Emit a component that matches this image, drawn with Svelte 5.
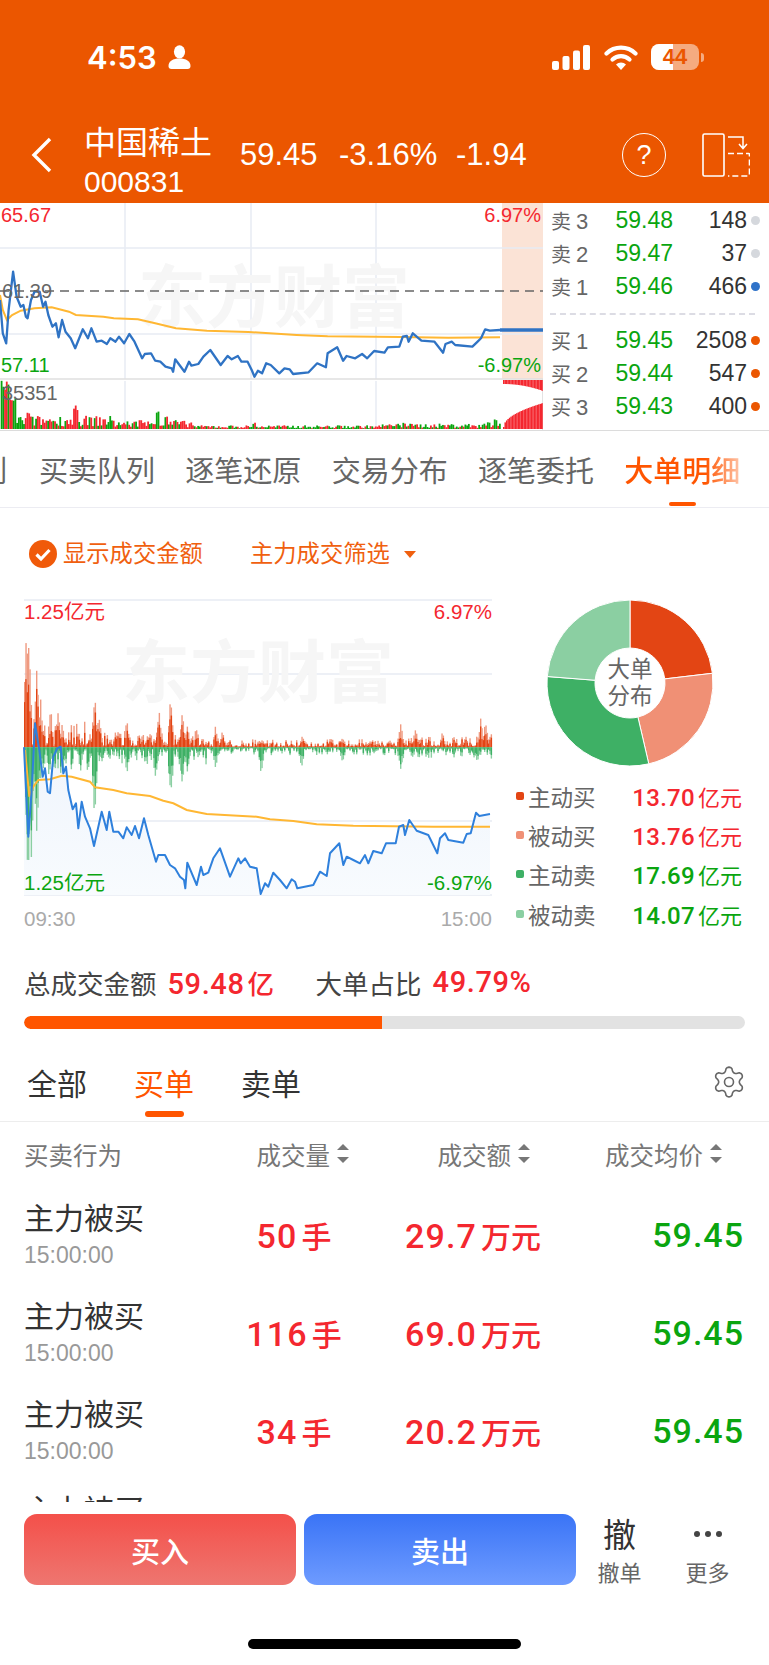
<script>
  // seeded generator so the bars stay the same between reloads
  let seed = 7;
  function rnd() {
    seed = (seed * 16807) % 2147483647;
    return seed / 2147483647;
  }

  function line(points, sx, sy, oy, ox = 0) {
    return points.map((p) => `${(p[0] / sx + ox).toFixed(1)},${(p[1] / sy + oy).toFixed(1)}`).join(' ');
  }

  // intraday price, drawn at 2.9 x 3 units
  const priceRaw = [[0,300],[8,400],[18,430],[25,330],[38,215],[48,290],[60,320],[68,315],[75,350],[80,355],[90,300],[100,275],[115,275],[125,320],[132,305],[140,345],[152,380],[162,370],[170,412],[180,360],[190,395],[205,415],[218,445],[240,388],[255,415],[265,385],[280,425],[295,422],[310,432],[320,415],[335,425],[345,410],[360,430],[375,402],[390,425],[412,475],[420,462],[438,460],[450,482],[465,485],[480,500],[498,505],[502,515],[508,478],[535,515],[548,485],[555,497],[575,492],[590,470],[610,450],[640,495],[660,468],[672,478],[690,468],[700,485],[718,485],[730,510],[738,530],[748,512],[760,520],[772,490],[785,495],[810,520],[825,505],[840,508],[850,522],[895,517],[920,490],[945,502],[950,460],[978,442],[995,482],[1005,468],[1030,475],[1050,462],[1065,475],[1085,453],[1115,458],[1125,442],[1158,440],[1168,410],[1180,408],[1185,425],[1197,400],[1222,422],[1260,425],[1285,458],[1292,432],[1310,425],[1320,435],[1370,440],[1385,425],[1395,415],[1407,388],[1420,392],[1450,390]];
  const avgRaw = [[0,285],[8,330],[20,360],[35,345],[60,332],[100,325],[150,322],[200,335],[220,345],[300,350],[330,355],[400,358],[450,370],[510,385],[600,392],[720,396],[860,405],[950,409],[1160,411],[1300,413],[1450,412]];
  const pricePts = line(priceRaw, 2.9, 3, 0);
  const avgPts = line(avgRaw, 2.9, 3, 0);

  // same day on the big-order chart, 3 x 3 units
  const bigRaw = [[72,472],[78,600],[85,740],[95,600],[105,400],[118,480],[128,560],[135,535],[143,605],[150,610],[160,500],[172,475],[182,470],[190,550],[198,530],[205,600],[218,658],[228,640],[235,715],[245,635],[255,680],[270,715],[282,768],[305,665],[320,720],[328,665],[340,725],[355,725],[370,745],[380,712],[395,735],[405,708],[417,745],[432,685],[445,735],[468,815],[475,795],[495,795],[510,825],[525,835],[540,860],[552,870],[556,895],[562,818],[590,885],[603,830],[610,855],[625,848],[640,805],[660,775],[690,860],[715,805],[722,820],[735,805],[750,830],[770,835],[782,912],[795,880],[805,890],[820,848],[840,870],[860,895],[875,868],[885,875],[892,895],[940,885],[960,845],[980,858],[990,790],[1018,760],[1030,825],[1040,800],[1060,810],[1080,820],[1095,795],[1105,820],[1120,783],[1145,790],[1158,760],[1187,760],[1197,710],[1210,705],[1215,735],[1228,690],[1250,722],[1285,735],[1312,790],[1320,745],[1335,730],[1345,750],[1390,758],[1400,732],[1412,730],[1428,668],[1438,678],[1470,672]];
  const bigAvgRaw = [[75,480],[88,620],[100,590],[115,570],[150,568],[185,557],[215,560],[270,575],[285,592],[340,600],[380,610],[450,618],[490,632],[520,640],[560,660],[620,672],[770,680],[810,688],[880,693],[950,703],[1060,707],[1300,710],[1470,710]];
  const bigPts = line(bigRaw, 3, 3, 0);
  const bigAvgPts = line(bigAvgRaw, 3, 3, 0);
  const bigArea = `24,305 ${bigPts} 490,305`;

  const upPeaks = [[78,400],[85,370],[108,260],[120,150],[150,120],[172,120],[185,70],[282,165],[295,110],[378,95],[475,125],[510,160],[545,115],[560,70],[645,70],[665,50],[785,30],[905,40],[990,30],[1025,35],[1200,80],[1245,70],[1325,50],[1395,40],[1440,90],[1455,85],[1475,60]];
  const downPeaks = [[75,120],[82,440],[92,370],[108,310],[118,130],[145,90],[160,60],[240,70],[282,220],[305,50],[378,90],[465,110],[510,175],[545,135],[560,80],[645,70],[782,100],[903,65],[1025,50],[1200,80],[1235,40],[1430,50],[1475,50]];

  function envelope(peaks, x, base) {
    const n = rnd();
    let h = base * (0.15 + n * n * 1.1);
    for (const [px, ph] of peaks) {
      const d = Math.abs(px - x);
      if (d < 9) h = Math.max(h, ph * (1 - d / 12) * (0.75 + rnd() * 0.25));
    }
    return h / 3;
  }

  const bigBars = [];
  for (let x = 72; x < 1476; x += 4) {
    const base = x < 300 ? 62 : x < 620 ? 42 : x < 1180 ? 20 : 26;
    const up = envelope(upPeaks, x, base);
    const down = envelope(downPeaks, x, base);
    bigBars.push({
      x: x / 3,
      up,
      upDark: up * (0.4 + rnd() * 0.4),
      down,
      downDark: down * (0.45 + rnd() * 0.35)
    });
  }

  // traded volume strip under the price chart
  const volPeaks = [[5,160],[18,150],[28,95],[40,100],[80,50],[218,75],[405,35],[455,62],[480,40],[505,30],[735,20],[1170,20],[1415,25],[1435,30]];
  const volBars = [];
  for (let x = 2; x < 1450; x += 5) {
    let h = (x < 330 ? 32 : x < 560 ? 20 : x < 1100 ? 9 : 13) * (0.25 + rnd());
    for (const [px, ph] of volPeaks) {
      if (Math.abs(px - x) < 7) h = Math.max(h, ph * (0.75 + rnd() * 0.25));
    }
    volBars.push({ x: x / 2.9, h: h / 3, up: rnd() > 0.5 });
  }

  // call auction bars on the shaded part of the strip
  const auctionBars = [];
  for (let i = 0; i < 28; i++) {
    const t = i / 27;
    auctionBars.push({
      x: 503 + i * 1.46,
      low: 2 + 24 * Math.sqrt(t),
      high: 4 + 7 * t * t
    });
  }

  // six-lobed gear outline
  const gear = (() => {
    const pts = [];
    for (let a = 0; a < 360; a += 6) {
      const rad = ((a - 90) * Math.PI) / 180;
      const w = Math.cos(6 * rad + Math.PI);
      const r = 12.6 + 2.3 * Math.sign(w) * Math.pow(Math.abs(w), 0.6);
      pts.push(`${(16 + r * Math.cos(rad)).toFixed(2)},${(16 + r * Math.sin(rad)).toFixed(2)}`);
    }
    return 'M' + pts.join('L') + 'Z';
  })();

  function slice(from, to) {
    const total = 59.22;
    const R = 83;
    const r = 35;
    const a = (from / total) * 2 * Math.PI - Math.PI / 2;
    const b = (to / total) * 2 * Math.PI - Math.PI / 2;
    const large = b - a > Math.PI ? 1 : 0;
    const p = (rad, k) => `${(84 + k * Math.cos(rad)).toFixed(2)} ${(84 + k * Math.sin(rad)).toFixed(2)}`;
    return `M${p(a, r)}L${p(a, R)}A${R} ${R} 0 ${large} 1 ${p(b, R)}L${p(b, r)}A${r} ${r} 0 ${large} 0 ${p(a, r)}Z`;
  }

  const asks = [
    { label: '卖', n: 3, price: '59.48', vol: '148', dot: 'grey' },
    { label: '卖', n: 2, price: '59.47', vol: '37', dot: 'grey' },
    { label: '卖', n: 1, price: '59.46', vol: '466', dot: 'blue' }
  ];
  const bids = [
    { label: '买', n: 1, price: '59.45', vol: '2508', dot: 'orange' },
    { label: '买', n: 2, price: '59.44', vol: '547', dot: 'orange' },
    { label: '买', n: 3, price: '59.43', vol: '400', dot: 'orange' }
  ];
  const tabs = ['买卖队列', '逐笔还原', '交易分布', '逐笔委托'];
  const legend = [
    { name: '主动买', value: '13.70', color: '#e34514', up: true },
    { name: '被动买', value: '13.76', color: '#f09075', up: true },
    { name: '主动卖', value: '17.69', color: '#3eb065', up: false },
    { name: '被动卖', value: '14.07', color: '#8bcfa2', up: false }
  ];
  const trades = [
    { qty: '50', amount: '29.7' },
    { qty: '116', amount: '69.0' },
    { qty: '34', amount: '20.2' }
  ];
</script>

<div class="page">
  <header class="top">
    <div class="status">
      <span class="clock">4:53</span>
      <svg class="person" width="23" height="24" viewBox="0 0 23 24">
        <ellipse cx="11.5" cy="6.8" rx="5.6" ry="6.6" fill="#fff" />
        <path d="M0.5 21c0-5 4.5-7.6 11-7.6s11 2.6 11 7.6c0 2-1 3-3 3H3.500c-2 0-3-1-3-3z" fill="#fff" />
      </svg>
      <svg class="signal" width="38" height="25" viewBox="0 0 38 25">
        <rect x="0" y="16" width="7" height="9" rx="2" fill="#fff" />
        <rect x="10.500" y="11" width="7" height="14" rx="2" fill="#fff" />
        <rect x="21" y="5.500" width="7" height="19.500" rx="2" fill="#fff" />
        <rect x="31" y="0" width="7" height="25" rx="2" fill="#fff" />
      </svg>
      <svg class="wifi" width="34" height="25" viewBox="0 0 34 25">
        <path d="M2.500 8.500a21 21 0 0 1 29 0" fill="none" stroke="#fff" stroke-width="4.200" stroke-linecap="round" />
        <path d="M8.500 14.500a12.500 12.500 0 0 1 17 0" fill="none" stroke="#fff" stroke-width="4.200" stroke-linecap="round" />
        <path d="M12 19.500a7 7 0 0 1 10 0L17 25z" fill="#fff" />
      </svg>
      <div class="battery">
        <span class="level"></span>
        <span class="charge">44</span>
      </div>
      <span class="nub"></span>
    </div>

    <div class="quote-bar">
      <svg class="back" width="21" height="36" viewBox="0 0 21 36">
        <path d="M19 2L3 18l16 16" fill="none" stroke="#fff" stroke-width="3.400" />
      </svg>
      <div class="stock">
        <div class="stock-name">中国稀土</div>
        <div class="stock-code">000831</div>
      </div>
      <div class="prices">
        <span>59.45</span>
        <span>-3.16%</span>
        <span>-1.94</span>
      </div>
      <div class="help">?</div>
      <svg class="split" width="48" height="44" viewBox="0 0 48 44">
        <rect x="1" y="1" width="21" height="42" rx="1.500" fill="none" stroke="#fff" stroke-width="1.600" />
        <path d="M26 20.500h20.500a1 1 0 0 1 1 1V42a1 1 0 0 1-1 1H26" fill="none" stroke="#fff" stroke-width="1.600" stroke-dasharray="6 3" />
        <path d="M26 4h15v11M37 11l4 4.500 4-4.500" fill="none" stroke="#fff" stroke-width="1.500" />
      </svg>
    </div>
  </header>

  <section class="quote">
    <div class="minute">
      <svg width="543" height="227" viewBox="0 203 543 227">
        <rect x="502" y="203" width="41" height="176" fill="#fbe3d6" />
        <g stroke="#e8ebf3" stroke-width="1.500">
          <path d="M125 203V379M251 203V379M376 203V379M125 381V429M251 381V429M376 381V429" />
          <path d="M0 248H543M0 334H543" />
        </g>
        <path d="M0 379H543" stroke="#dfdfdf" stroke-width="1.500" />
        <text class="mark" x="138" y="322">东方财富</text>
        <path d="M0 291H543" stroke="#666" stroke-width="1.300" stroke-dasharray="9 6" />
        {#each volBars as b}
          <rect x={b.x} y={429 - b.h} width="1.800" height={b.h} fill={b.up ? '#f4272f' : '#0aa50f'} />
        {/each}
        {#each auctionBars as b}
          <rect x={b.x} y={429 - b.low} width="1.500" height={b.low} fill="#f4272f" />
          <rect x={b.x} y="380" width="1.500" height={b.high} fill="#f4272f" />
        {/each}
        <g transform="translate(0 200)">
          <polyline points={avgPts} fill="none" stroke="#ffb733" stroke-width="2" />
          <polyline points={pricePts} fill="none" stroke="#2f73c4" stroke-width="2.300" stroke-linejoin="round" />
        </g>
        <path d="M500 330H543" stroke="#2f73c4" stroke-width="3.500" />
        <text class="axis red" x="1" y="222">65.67</text>
        <text class="axis red" x="541" y="222" text-anchor="end">6.97%</text>
        <text class="axis grey" x="2" y="298">61.39</text>
        <text class="axis green" x="1" y="372">57.11</text>
        <text class="axis green" x="541" y="372" text-anchor="end">-6.97%</text>
        <text class="axis grey" x="2" y="400">35351</text>
      </svg>
    </div>

    <div class="book">
      <div class="side">
        {#each asks as row}
          <div class="level-row">
            <span class="tag">{row.label}<i>{row.n}</i></span>
            <span class="ask-price">{row.price}</span>
            <span class="qty">{row.vol}</span>
            <span class="dot {row.dot}"></span>
          </div>
        {/each}
      </div>
      <div class="spread"></div>
      <div class="side">
        {#each bids as row}
          <div class="level-row">
            <span class="tag">{row.label}<i>{row.n}</i></span>
            <span class="ask-price">{row.price}</span>
            <span class="qty">{row.vol}</span>
            <span class="dot {row.dot}"></span>
          </div>
        {/each}
      </div>
    </div>
  </section>

  <nav class="tabs">
    <span class="cut">列</span>
    {#each tabs as t}
      <span class="tab">{t}</span>
    {/each}
    <span class="tab active">大单明细<em></em></span>
  </nav>

  <div class="filters">
    <svg width="28" height="28" viewBox="0 0 28 28">
      <circle cx="14" cy="14" r="14" fill="#f05a0a" />
      <path d="M7.500 14.500l4.500 4.500 8.500-9" fill="none" stroke="#fff" stroke-width="3.200" />
    </svg>
    <span class="show">显示成交金额</span>
    <span class="pick">主力成交筛选</span>
    <span class="caret"></span>
  </div>

  <section class="big">
    <div class="big-chart">
      <svg width="480" height="340" viewBox="20 596 480 340">
        <path d="M24 600H492M24 674H492M24 821H492M24 895H492" stroke="#e8ebf3" stroke-width="1.500" />
        <text class="mark" x="122" y="697">东方财富</text>
        <defs>
          <linearGradient id="under" x1="0" y1="0" x2="0" y2="1">
            <stop offset="0" stop-color="#eef4fc" />
            <stop offset="1" stop-color="#f8fbfe" />
          </linearGradient>
        </defs>
        <g transform="translate(0 590)">
          <polygon points={bigArea} fill="url(#under)" />
          {#each bigBars as b}
            <rect x={b.x} y={157.300 - b.up} width="1.400" height={b.up} fill="#ef9a80" />
            <rect x={b.x} y={157.300 - b.upDark} width="1.400" height={b.upDark} fill="#e34514" />
            <rect x={b.x} y="157.300" width="1.400" height={b.down} fill="#8bcfa2" />
            <rect x={b.x} y="157.300" width="1.400" height={b.downDark} fill="#3eb065" />
          {/each}
          <polyline points={bigAvgPts} fill="none" stroke="#ffb733" stroke-width="2" />
          <polyline points={bigPts} fill="none" stroke="#2f80dc" stroke-width="2" stroke-linejoin="round" />
        </g>
        <text class="axis small red" x="24" y="619">1.25亿元</text>
        <text class="axis small red" x="492" y="619" text-anchor="end">6.97%</text>
        <text class="axis small green" x="24" y="890">1.25亿元</text>
        <text class="axis small green" x="492" y="890" text-anchor="end">-6.97%</text>
        <text class="axis small pale" x="24" y="926">09:30</text>
        <text class="axis small pale" x="492" y="926" text-anchor="end">15:00</text>
      </svg>
    </div>

    <div class="share">
      <svg class="donut" width="168" height="168" viewBox="0 0 168 168">
        <g stroke="#fff" stroke-width="1">
          <path d={slice(0, 13.7)} fill="#e34514" />
          <path d={slice(13.7, 27.46)} fill="#f09075" />
          <path d={slice(27.46, 45.15)} fill="#3eb065" />
          <path d={slice(45.15, 59.22)} fill="#8bcfa2" />
        </g>
        <text class="donut-text" x="84" y="78" text-anchor="middle">大单</text>
        <text class="donut-text" x="84" y="105" text-anchor="middle">分布</text>
      </svg>
      <ul class="legend">
        {#each legend as item}
          <li>
            <span class="swatch" style="background:{item.color}"></span>
            <span class="legend-name">{item.name}</span>
            <span class="legend-value" class:up={item.up} class:down={!item.up}>{item.value}<small>亿元</small></span>
          </li>
        {/each}
      </ul>
    </div>
  </section>

  <div class="totals">
    <span>总成交金额</span>
    <strong>59.48<small>亿</small></strong>
    <span class="ratio">大单占比</span>
    <strong>49.79%</strong>
  </div>
  <div class="progress"><div class="fill" style="width:49.700%"></div></div>

  <div class="sub-tabs">
    <span>全部</span>
    <span class="on">买单<em></em></span>
    <span>卖单</span>
    <svg class="gear" width="32" height="32" viewBox="0 0 32 32">
      <path d={gear} fill="none" stroke="#666" stroke-width="1.600" stroke-linejoin="round" />
      <circle cx="16" cy="16" r="4.500" fill="none" stroke="#666" stroke-width="1.600" />
    </svg>
  </div>

  <div class="table-head">
    <span class="head-left">买卖行为</span>
    <span class="sort">成交量<i></i></span>
    <span class="sort">成交额<i></i></span>
    <span class="sort">成交均价<i></i></span>
  </div>

  <div class="rows">
    {#each trades as t}
      <div class="row">
        <div>
          <div class="kind">主力被买</div>
          <div class="time">15:00:00</div>
        </div>
        <span class="val qty-col">{t.qty}<small>手</small></span>
        <span class="val amt-col">{t.amount}<small>万元</small></span>
        <span class="val price-col">59.45</span>
      </div>
    {/each}
    <div class="kind next">主力被买</div>
  </div>

  <footer class="actions">
    <button class="buy">买入</button>
    <button class="sell">卖出</button>
    <div class="tool">
      <span class="glyph">撤</span>
      <span class="tool-name">撤单</span>
    </div>
    <div class="tool more">
      <span class="dots"><b></b><b></b><b></b></span>
      <span class="tool-name">更多</span>
    </div>
  </footer>
  <div class="home"><span></span></div>
</div>

<style>
  :global(body) {
    margin: 0;
    background: #fff;
  }

  .page {
    width: 769px;
    height: 1665px;
    display: flex;
    flex-direction: column;
    overflow: hidden;
    background: #fff;
    color: #333;
    font-family: "Liberation Sans", "Noto Sans CJK SC", sans-serif;
  }

  .top {
    height: 203px;
    flex: none;
    background: #eb5600;
    color: #fff;
  }

  .status {
    height: 46px;
    padding: 34px 0 0 87px;
    display: flex;
    align-items: center;
    box-sizing: content-box;
  }

  .clock {
    font-family: Inter, "Liberation Sans", sans-serif;
    font-size: 31px;
    font-weight: 600;
    width: 81px;
  }

  .person {
    margin-right: 361px;
  }

  .signal {
    margin-right: 14px;
  }

  .wifi {
    margin-right: 13px;
  }

  .battery {
    position: relative;
    width: 48px;
    height: 26px;
    border-radius: 8px;
    background: rgba(255, 255, 255, 0.5);
    overflow: hidden;
    color: #eb5600;
    text-align: center;
  }

  .level {
    position: absolute;
    left: 0;
    top: 0;
    bottom: 0;
    width: 22px;
    background: #fff;
  }

  .charge {
    position: relative;
    font-size: 22px;
    font-weight: 700;
    line-height: 26px;
  }

  .nub {
    width: 3px;
    height: 9px;
    margin-left: 2px;
    border-radius: 0 3px 3px 0;
    background: rgba(255, 255, 255, 0.5);
  }

  .quote-bar {
    margin-top: 39px;
    display: flex;
    align-items: center;
    height: 72px;
  }

  .back {
    margin: 0 32px 0 31px;
    flex: none;
  }

  .stock {
    width: 156px;
    flex: none;
    margin-top: 12px;
  }

  .stock-name {
    font-size: 32px;
    line-height: 38px;
    margin-bottom: 3px;
  }

  .stock-code {
    font-size: 30px;
    line-height: 34px;
  }

  .prices {
    display: grid;
    grid-template-columns: 99px 117px 1fr;
    width: 382px;
    font-size: 31px;
    flex: none;
  }

  .help {
    width: 42px;
    height: 42px;
    border: 1.600px solid #fff;
    border-radius: 50%;
    text-align: center;
    font-size: 27px;
    line-height: 42px;
    flex: none;
    margin-right: 36px;
  }

  .quote {
    height: 227px;
    flex: none;
    display: flex;
    border-bottom: 1.500px solid #dcdcdc;
  }

  .minute {
    width: 543px;
    height: 227px;
    flex: none;
    border-right: 1px solid #e3e3e3;
    box-sizing: border-box;
  }

  .minute svg {
    display: block;
  }

  .axis {
    font-family: "Liberation Sans", "Noto Sans CJK SC", sans-serif;
    font-size: 20px;
  }

  .axis.small {
    font-size: 20.500px;
  }

  .red {
    fill: #f4272f;
  }

  .green {
    fill: #0aa50f;
  }

  .grey {
    fill: #666;
  }

  .pale {
    fill: #aaa;
  }

  .mark {
    font-family: "Noto Sans CJK SC", sans-serif;
    font-size: 68px;
    font-weight: 700;
    fill: #f6f6f6;
  }

  .book {
    flex: 1;
    display: flex;
    flex-direction: column;
    padding-top: 1px;
  }

  .level-row {
    display: flex;
    align-items: center;
    height: 33px;
    padding-left: 8px;
    font-size: 23px;
  }

  .tag {
    width: 60px;
    color: #666;
    font-size: 20px;
    flex: none;
  }

  .tag i {
    font-style: normal;
    margin-left: 5px;
    font-size: 22px;
  }

  .ask-price {
    width: 62px;
    text-align: right;
    color: #0aa50f;
    flex: none;
  }

  .qty {
    width: 74px;
    text-align: right;
    color: #333;
    flex: none;
  }

  .dot {
    width: 9px;
    height: 9px;
    margin-left: 4px;
    border-radius: 50%;
    flex: none;
  }

  .dot.grey {
    background: #d5d8dd;
  }

  .dot.blue {
    background: #2f73c9;
  }

  .dot.orange {
    background: #eb5600;
  }

  .spread {
    height: 0;
    margin: 10px 14px 9px 7px;
    border-top: 2px dashed #dcdce4;
  }

  .tabs {
    height: 76px;
    flex: none;
    display: flex;
    align-items: center;
    position: relative;
    border-bottom: 1.500px solid #ececf2;
    overflow: hidden;
    font-size: 29px;
    color: #666;
    white-space: nowrap;
  }

  .cut {
    margin-left: -22px;
    margin-right: 32px;
  }

  .tab {
    margin-right: 30.300px;
    position: relative;
  }

  .tab.active {
    color: transparent;
    font-weight: 500;
    background: linear-gradient(90deg, #ff5500 70%, #ffc4a8 100%);
    -webkit-background-clip: text;
    background-clip: text;
    position: static;
  }

  .tab em {
    position: absolute;
    left: 669px;
    bottom: 1px;
    width: 27px;
    height: 4px;
    border-radius: 2px;
    background: #ff5500;
  }

  .filters {
    height: 92px;
    flex: none;
    box-sizing: border-box;
    padding: 32px 0 0 29px;
    display: flex;
    align-items: flex-start;
    font-size: 23.300px;
    color: #f0600f;
  }

  .show {
    margin-left: 6px;
    line-height: 28px;
    width: 187px;
  }

  .pick {
    line-height: 28px;
  }

  .caret {
    margin: 11px 0 0 14px;
    width: 0;
    height: 0;
    border-left: 6.500px solid transparent;
    border-right: 6.500px solid transparent;
    border-top: 7px solid #f0600f;
  }

  .big {
    height: 340px;
    flex: none;
    display: flex;
    margin-top: -4px;
  }

  .big-chart {
    width: 500px;
    flex: none;
    padding-left: 20px;
    box-sizing: border-box;
    overflow: hidden;
  }

  .big-chart svg {
    display: block;
  }

  .share {
    flex: 1;
    overflow: hidden;
  }

  .donut {
    display: block;
    margin: 3px 0 0 46px;
  }

  .donut-text {
    font-family: "Noto Sans CJK SC", sans-serif;
    font-size: 22.500px;
    fill: #666;
  }

  .legend {
    list-style: none;
    margin: 9px 0 0;
    padding: 0;
  }

  .legend li {
    height: 39.300px;
    display: flex;
    align-items: center;
    padding-left: 16px;
  }

  .swatch {
    width: 8px;
    height: 8px;
    border-radius: 2px;
    flex: none;
  }

  .legend-name {
    margin-left: 4px;
    width: 68px;
    font-size: 22.500px;
    color: #666;
    flex: none;
  }

  .legend-value {
    width: 146px;
    text-align: right;
    font-size: 24px;
    font-weight: 500;
    font-family: Roboto, "Noto Sans CJK SC", sans-serif;
    letter-spacing: 0.3px;
    flex: none;
  }

  .legend-value small {
    margin-left: 3px;
    font-size: 22px;
    font-weight: 400;
    letter-spacing: 0;
  }

  .legend-value.up {
    color: #f4272f;
  }

  .legend-value.down {
    color: #0aa50f;
  }

  .totals {
    height: 60px;
    flex: none;
    margin: 16px 0 4px;
    padding-left: 24px;
    display: flex;
    align-items: center;
    font-size: 26.500px;
    color: #444;
  }

  .totals strong {
    margin-left: 11px;
    color: #f4272f;
    font-size: 29px;
    font-weight: 500;
    font-family: Roboto, "Noto Sans CJK SC", sans-serif;
    letter-spacing: 0.6px;
  }

  .totals small {
    font-size: 26.500px;
    margin-left: 3px;
  }

  .ratio {
    margin-left: 41px;
  }

  .progress {
    height: 13px;
    flex: none;
    margin: 0 24px;
    border-radius: 7px;
    background: #e2e2e2;
    overflow: hidden;
  }

  .fill {
    height: 100%;
    border-radius: 7px 0 0 7px;
    background: #ff5500;
  }

  .sub-tabs {
    height: 93px;
    flex: none;
    box-sizing: border-box;
    display: flex;
    align-items: center;
    padding: 13px 0 0 27px;
    gap: 47px;
    font-size: 30px;
    color: #333;
    position: relative;
    border-bottom: 1px solid #ededed;
  }

  .sub-tabs .on {
    color: #ff5500;
    position: relative;
  }

  .sub-tabs em {
    position: absolute;
    left: 11px;
    top: 51px;
    width: 39px;
    height: 6px;
    border-radius: 3px;
    background: #ff5500;
  }

  .gear {
    margin-left: auto;
    margin-right: 24px;
  }

  .table-head {
    height: 64px;
    flex: none;
    display: grid;
    grid-template-columns: 232px 93px 181px 192px;
    padding-left: 24px;
    align-items: center;
    font-size: 24.500px;
    color: #777;
  }

  .head-left {
    white-space: nowrap;
  }

  .sort {
    position: relative;
    justify-self: end;
    padding-right: 19px;
    white-space: nowrap;
  }

  .sort i::before,
  .sort i::after {
    content: "";
    position: absolute;
    right: 0;
    border-left: 6px solid transparent;
    border-right: 6px solid transparent;
  }

  .sort i::before {
    top: calc(50% - 10px);
    border-bottom: 6.500px solid #777;
  }

  .sort i::after {
    top: calc(50% + 3px);
    border-top: 6.500px solid #777;
  }

  .rows {
    flex: 1;
    min-height: 0;
    overflow: hidden;
  }

  .row {
    height: 98px;
    display: grid;
    grid-template-columns: 191px 158px 200px 171px;
    padding: 0 0 0 24px;
    align-items: center;
  }

  .kind {
    font-size: 30px;
    line-height: 40px;
    color: #333;
    white-space: nowrap;
  }

  .kind.next {
    padding: 11px 0 0 24px;
  }

  .time {
    font-size: 23px;
    line-height: 32px;
    color: #999;
  }

  .val {
    font-size: 34px;
    font-weight: 500;
    font-family: Roboto, "Noto Sans CJK SC", sans-serif;
    letter-spacing: 1.200px;
    color: #f4272f;
    white-space: nowrap;
    text-align: center;
  }

  .val small {
    margin-left: 4px;
    font-size: 30px;
    letter-spacing: 0;
  }

  .val.price-col {
    color: #0aa50f;
    text-align: right;
    letter-spacing: 1px;
  }

  .actions {
    height: 83px;
    flex: none;
    background: #fff;
    box-sizing: border-box;
    padding: 12px 0 0 24px;
    display: flex;
    align-items: flex-start;
  }

  .actions button {
    width: 272px;
    height: 71px;
    border: 0;
    border-radius: 13px;
    color: #fff;
    font-family: inherit;
    font-size: 29px;
    font-weight: 500;
    padding: 0;
  }

  .buy {
    background: linear-gradient(180deg, #f4504a, #ee7670);
    margin-right: 8px;
  }

  .sell {
    background: linear-gradient(180deg, #3a74f6, #6e9bff);
    margin-right: 21px;
  }

  .tool {
    width: 45px;
    display: flex;
    flex-direction: column;
    align-items: center;
    white-space: nowrap;
  }

  .tool.more {
    margin-left: 43px;
  }

  .glyph {
    height: 46px;
    font-size: 33px;
    line-height: 44px;
    color: #333;
  }

  .dots {
    height: 46px;
    display: flex;
    gap: 5px;
    align-items: center;
    padding-bottom: 6px;
    box-sizing: border-box;
  }

  .dots b {
    width: 6px;
    height: 6px;
    border-radius: 50%;
    background: #444;
  }

  .tool-name {
    font-size: 22px;
    line-height: 28px;
    color: #666;
  }

  .home {
    height: 80px;
    flex: none;
    background: #fff;
    display: flex;
    justify-content: center;
    padding-top: 54px;
    box-sizing: border-box;
  }

  .home span {
    width: 273px;
    height: 10px;
    border-radius: 5px;
    background: #000;
  }
</style>
